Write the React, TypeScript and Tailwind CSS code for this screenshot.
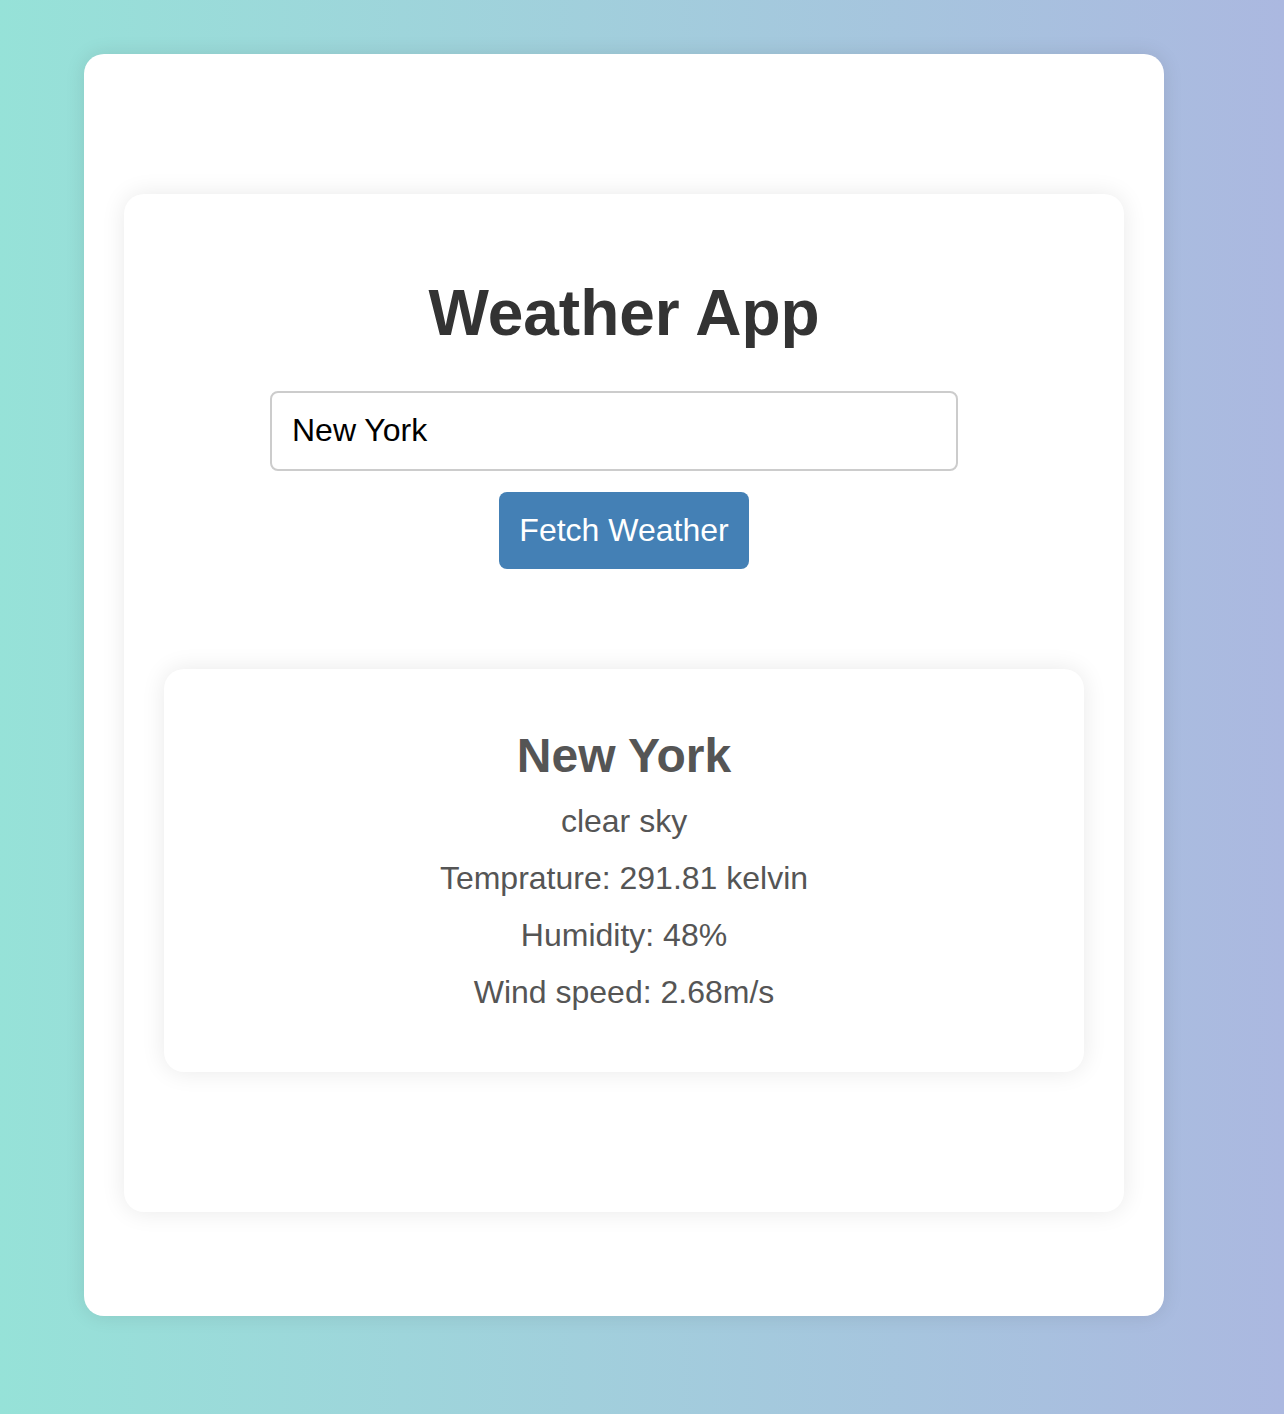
import React, { useState } from "react";

const App: React.FC = () => {
  const [city, setCity] = useState("New York");

  return (
    <div
      className="min-h-[1414px] w-full bg-gradient-to-r from-[#96e2d8] to-[#abb8e0] pt-[54px] pb-[98px]"
      style={{ fontFamily: '"Liberation Sans", Arial, sans-serif' }}
    >
      {/* Outer card */}
      <div className="ml-[84px] w-[1080px] bg-white rounded-[20px] shadow-[0_0_20px_rgba(0,0,0,0.1)] px-10 pt-[140px] pb-[104px]">
        {/* Weather app container */}
        <div className="bg-white rounded-[20px] shadow-[0_0_24px_rgba(0,0,0,0.09)] p-10 flex flex-col items-center">
          <h1 className="mt-[43px] mb-10 text-[64px] leading-[1.15] font-bold text-[#333]">
            Weather App
          </h1>

          <input
            type="text"
            value={city}
            onChange={(e) => setCity(e.target.value)}
            className="mr-5 w-[688px] h-[80px] border-2 border-[#ccc] rounded-lg px-5 text-[32px] text-black outline-none"
          />

          <button className="mt-[21px] bg-[#4480b5] text-white text-[32px] leading-[1.15] px-5 pt-5 pb-[21px] rounded-lg">
            Fetch Weather
          </button>

          {/* Result */}
          <div className="mt-[100px] mb-[100px] w-full bg-white rounded-[20px] shadow-[0_0_24px_rgba(0,0,0,0.09)] pt-[60px] pb-[61px] flex flex-col items-center gap-5 text-[#555]">
            <h2 className="mb-[1px] text-[48px] leading-[53px] font-bold">New York</h2>
            <p className="text-[32px] leading-[1.15]">clear sky</p>
            <p className="text-[32px] leading-[1.15]">Temprature: 291.81 kelvin</p>
            <p className="text-[32px] leading-[1.15]">Humidity: 48%</p>
            <p className="text-[32px] leading-[1.15]">Wind speed: 2.68m/s</p>
          </div>
        </div>
      </div>
    </div>
  );
};

export default App;
